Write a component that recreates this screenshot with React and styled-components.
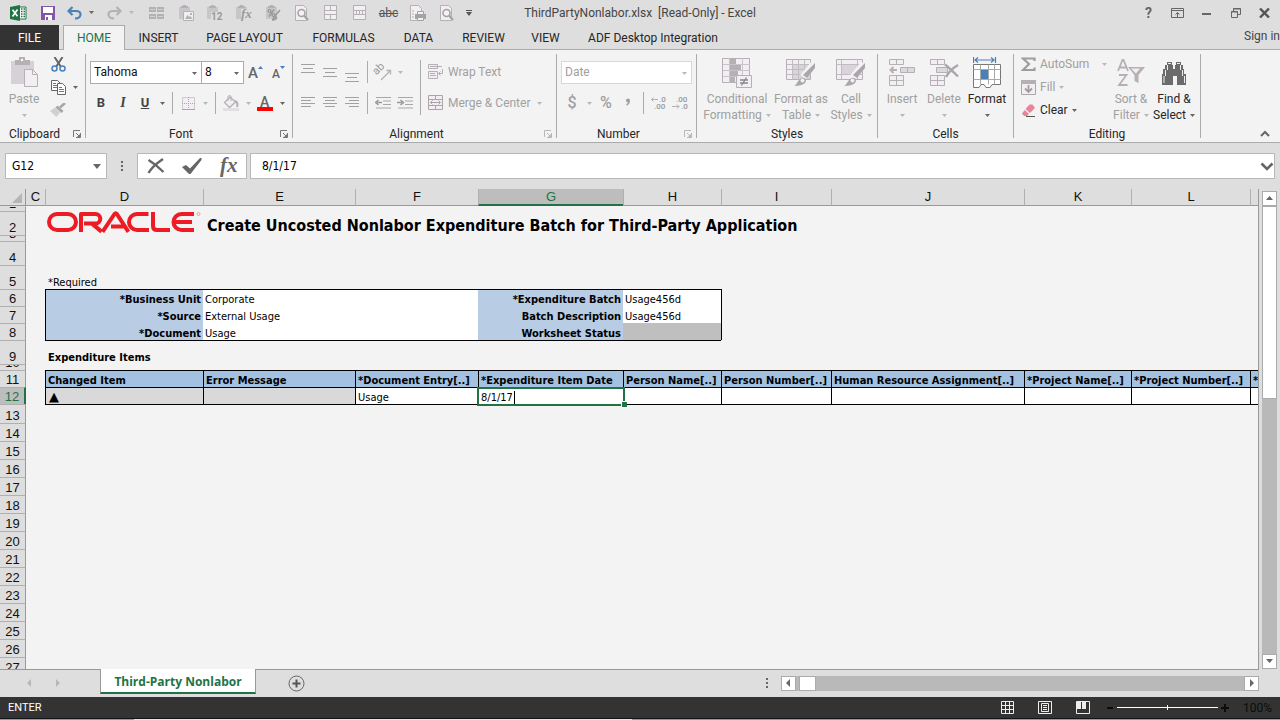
import React from 'react';
import styled, { createGlobalStyle, css } from 'styled-components';

const ui = "Roboto, 'Open Sans', 'Liberation Sans', sans-serif";
const cellFont = "'DejaVu Sans Condensed', 'DejaVu Sans', sans-serif";
const c = {
  chrome: '#dedede',
  face: '#f3f3f3',
  line: '#ababab',
  text: '#262626',
  off: '#a0a0a0',
  offIcon: '#b4b0b4',
  offFill: '#f3eef4',
  icon: '#666666',
  green: '#217346',
  blue: '#4a80b8',
  label: '#b8cce4',
  head: '#a3c1e0',
  dark: '#333333',
};

const Global = createGlobalStyle`
  *, *::before, *::after { box-sizing: border-box; }
  body { margin: 0; background: ${c.chrome}; font: 12px/16px ${ui}; color: ${c.text}; overflow: hidden; }
  button, input, select { font: inherit; color: inherit; margin: 0; padding: 0; border: 0; border-radius: 0; background: none; }
  button { cursor: pointer; white-space: nowrap; }
  input, select { outline: none; }
  svg { display: block; flex: none; }
`;

const Window = styled.div`
  display: flex;
  flex-direction: column;
  height: 100vh;
`;

/* Title bar */
const TitleBar = styled.header`
  display: grid;
  grid-template-columns: 1fr auto 1fr;
  align-items: center;
  height: 25px;
`;
const QuickAccess = styled.div`
  display: flex;
  align-items: center;
  padding-left: 4px;
`;
const QuickButton = styled.button`
  display: flex;
  align-items: center;
  justify-content: center;
  width: ${p => p.$w || 29}px;
  height: 22px;
  font-size: 12px;
  color: #555;
`;
const QuickSpace = styled.span`
  width: 6px;
`;
const Title = styled.div`
  color: #444;
  white-space: pre;
`;
const WindowButtons = styled.div`
  display: flex;
  justify-content: flex-end;
  padding-right: 1px;
`;

/* Tabs */
const TabRow = styled.nav`
  display: flex;
  height: 25px;
  box-shadow: inset 0 -1px 0 ${c.line};
`;
const tabKinds = {
  file: css`background: ${c.dark}; color: #fff; margin-right: 4px;`,
  active: css`
    background: ${c.face};
    color: ${c.green};
    border: 1px solid ${c.line};
    border-bottom: 0;
    margin-right: 2px;
  `,
};
const Tab = styled.button`
  width: ${p => p.$w}px;
  padding: 0;
  ${p => tabKinds[p.$kind]}
`;
const SignIn = styled.button`
  margin-left: auto;
  padding-bottom: 4px;
  align-self: center;
  color: #444;
`;

/* Ribbon */
const Ribbon = styled.section`
  display: flex;
  height: 93px;
  background: ${c.face};
  border-bottom: 1px solid ${c.line};
`;
const Group = styled.section`
  display: flex;
  flex-direction: column;
  flex: 0 0 ${p => p.$w}px;
`;
const GroupBody = styled.div`
  display: flex;
  height: 76px;
  padding-left: ${p => p.$pad || 0}px;
`;
const GroupFoot = styled.footer`
  display: flex;
  align-items: center;
  height: 16px;
  text-align: center;
`;
const GroupName = styled.span`
  flex: 1;
`;
const Launcher = styled.button`
  display: flex;
  justify-content: center;
  width: 16px;
  color: ${p => (p.$off ? '#b8b8b8' : '#777')};
`;
const GroupLine = styled.div`
  flex: none;
  width: 1px;
  margin: 4px 0;
  background: ${c.line};
`;
const BigButton = styled.button`
  display: flex;
  flex-direction: column;
  align-items: center;
  width: ${p => p.$w}px;
  height: 76px;
  padding-top: 6px;
  color: ${p => (p.$off ? c.off : c.text)};
`;
const BigIcon = styled.span`
  display: flex;
  align-items: center;
  height: 33px;
  margin-bottom: 2px;
`;
const BigLine = styled.span`
  display: flex;
  align-items: center;
  gap: 4px;
  height: 16px;
`;
const Stack = styled.div`
  display: flex;
  flex-direction: column;
  gap: 1px;
  padding-top: 3px;
  width: ${p => p.$w}px;
`;
const Rows = styled.div`
  display: flex;
  flex-direction: column;
  gap: 9px;
  padding-top: 11px;
`;
const Row = styled.div`
  display: flex;
  align-items: center;
  height: 22px;
`;
const Tool = styled.button`
  display: flex;
  align-items: center;
  justify-content: center;
  width: 22px;
  height: 22px;
  color: ${p => (p.$off ? c.off : '#444')};
`;
const Bold = styled.b`font-size: 13px;`;
const Italic = styled.i`font: italic bold 14px 'Liberation Serif', serif;`;
const Under = styled.b`font-size: 13px; text-decoration: underline;`;
const Symbol = styled.span`
  font-size: 16px;
  font-weight: 500;
`;
const Drop = styled.button`
  display: flex;
  align-items: center;
  justify-content: center;
  width: 12px;
  height: 22px;
`;
const Line = styled.i`
  align-self: ${p => (p.$tall ? 'flex-start' : 'stretch')};
  width: 1px;
  height: ${p => (p.$tall ? '55px' : 'auto')};
  margin: ${p => (p.$tall ? '10px 4px 0' : '0 4px')};
  background: ${c.line};
`;
const TextTool = styled.button`
  display: flex;
  align-items: center;
  gap: 4px;
  height: 22px;
  padding: 0 3px;
  color: ${p => (p.$off ? c.off : c.text)};
`;
const Fill = styled.span`flex: 1;`;
const Picker = styled.label`
  position: relative;
  display: flex;
  width: ${p => p.$w}px;
  height: 23px;
  margin-left: ${p => (p.$joined ? -1 : 0)}px;
  background: #fff;
  border: 1px solid ${p => (p.$off ? '#d8d8d8' : c.line)};
  color: ${p => (p.$off ? c.off : '#111')};
  select { appearance: none; flex: 1; padding-left: 3px; font-size: 12px; }
  svg { position: absolute; right: 4px; top: 9px; pointer-events: none; }
`;
const Collapse = styled.button`
  align-self: flex-end;
  margin-left: auto;
  padding: 4px 8px;
`;

/* Formula bar */
const FormulaBar = styled.div`
  display: flex;
  align-items: center;
  height: 46px;
  padding: 0 5px;
`;
const BarBox = styled.div`
  display: flex;
  align-items: center;
  min-width: 0;
  height: 26px;
  background: #fff;
  border: 1px solid #b9b9b9;
  font: 12px/16px ${cellFont};
  color: #000;
  flex: ${p => (p.$w ? `0 0 ${p.$w}px` : 1)};
  margin-right: ${p => p.$gap || 0}px;
  padding: 0 ${p => p.$end || 0}px 0 ${p => p.$pad || 0}px;
  justify-content: ${p => (p.$tools ? 'space-around' : 'flex-start')};
  input { flex: 1; min-width: 0; }
`;
const DotsBox = styled.span`
  display: flex;
  justify-content: center;
  width: ${p => p.$w}px;
`;
const BarTool = styled.button`
  display: flex;
  justify-content: center;
  width: 30px;
`;

/* Sheet */
const Body = styled.main`
  display: flex;
  flex: 1;
  min-height: 0;
`;
const Viewport = styled.div`
  flex: 1;
  min-width: 0;
  overflow: hidden;
  background: ${c.face};
  border-right: 1px solid #999;
`;
const Sheet = styled.table`
  width: 100%;
  table-layout: fixed;
  border-collapse: separate;
  border-spacing: 0;
  font: 11px/12px ${cellFont};
  color: #000;
`;
const headLook = css`
  padding: 0;
  font: 13px/14px 'Liberation Sans', sans-serif;
  color: #111;
`;
const ColHead = styled.th`
  ${headLook}
  height: 17px;
  background: ${c.chrome};
  border-left: ${p => (p.$first ? 0 : '1px solid #b0b0b0')};
  border-bottom: 1px solid #999;
  ${p => p.$on && css`background: #bdbdbd; color: ${c.green}; border-bottom: 2px solid ${c.green};`}
`;
const Corner = styled.th`
  height: 17px;
  padding: 0 3px 2px 12px;
  vertical-align: bottom;
  background: ${c.chrome};
  border-right: 1px solid #999;
  border-bottom: 1px solid #999;
`;
const RowHead = styled.th`
  ${headLook}
  background: ${c.chrome};
  border-top: 1px solid ${p => (p.$first ? c.chrome : '#b0b0b0')};
  border-right: 1px solid #999;
  ${p => p.$on && css`background: #bdbdbd; color: ${c.green}; border-right: 2px solid ${c.green};`}
`;
const RowNumber = styled.div`
  display: flex;
  align-items: flex-end;
  justify-content: center;
  height: ${p => p.$h - 1}px;
  overflow: hidden;
`;
const Cell = styled.td`
  padding: 0 2px 0 ${p => (p.$in ? 3 : 2)}px;
  vertical-align: bottom;
  white-space: nowrap;
  overflow: hidden;
  position: relative;
  background: ${p => p.$bg || 'transparent'};
  text-align: ${p => (p.$right ? 'right' : 'left')};
  font-weight: ${p => (p.$bold ? 700 : 400)};
  border-left: ${p => (p.$l ? '1px solid #000' : 0)};
  border-top: ${p => (p.$t ? '1px solid #000' : 0)};
  ${p => p.$open && 'overflow: visible;'}
`;
const SheetTitle = styled.h1`
  margin: 0;
  padding-left: 2px;
  font: bold 16px/18px ${cellFont};
`;
const Triangle = styled.span`
  display: block;
  font: 13px/14px 'DejaVu Sans', sans-serif;
`;
const Editor = styled.span`
  display: flex;
  align-items: center;
  height: 14px;
  input { width: 33px; height: 14px; }
`;
const Caret = styled.i`
  width: 1px;
  height: 13px;
  background: #000;
`;
const Selection = styled.span`
  position: absolute;
  inset: -1px -2px -2px -2px;
  border: 2px solid ${c.green};
  pointer-events: none;
  z-index: 1;
  &::after {
    content: '';
    position: absolute;
    right: -4px;
    bottom: -3px;
    width: 6px;
    height: 6px;
    background: ${c.green};
    border: solid #fff;
    border-width: 1px 0 0 1px;
  }
`;

/* Scroll bars */
const VScroll = styled.div`
  display: flex;
  flex-direction: column;
  width: 21px;
  padding: 2px 3px 0;
`;
const ScrollButton = styled.button`
  display: flex;
  align-items: center;
  justify-content: center;
  flex: none;
  width: 15px;
  height: 15px;
  background: #fff;
  border: 1px solid ${c.line};
`;
const Track = styled.div`
  display: flex;
  flex: 1;
  background: #b9b9b9;
  padding-left: ${p => (p.$h ? 3 : 0)}px;
`;
const Thumb = styled.div`
  background: #fff;
  border: 1px solid ${c.line};
  width: ${p => (p.$h ? '17px' : '15px')};
  height: ${p => (p.$h ? '15px' : '43%')};
`;

/* Sheet tabs and status bar */
const SheetBar = styled.div`
  display: flex;
  align-items: center;
  height: 28px;
  padding-right: 21px;
  background: linear-gradient(#999, #999) 0 0 / calc(100% - 21px) 1px no-repeat ${c.chrome};
`;
const SheetNav = styled.div`
  display: flex;
  justify-content: center;
  width: 100px;
  padding-right: 14px;
`;
const NavButton = styled.button`
  display: flex;
  justify-content: center;
  width: 28px;
`;
const SheetTab = styled.button`
  align-self: flex-start;
  height: 25px;
  width: 156px;
  background: #fff;
  border: 1px solid #999;
  border-width: 0 1px 2px;
  border-bottom-color: ${c.green};
  padding-top: 2px;
  color: ${c.green};
  font: bold 12px/20px 'Open Sans', sans-serif;
`;
const AddSheet = styled.button`
  margin-left: 32px;
`;
const HScroll = styled.div`
  display: flex;
  flex: 0 0 38%;
  min-width: 0;
`;
const StatusBar = styled.footer`
  display: flex;
  align-items: center;
  height: 21px;
  padding: 0 8px;
  background: ${c.dark};
  color: #fff;
  font-size: 11px;
`;
const ViewButtons = styled.div`
  display: flex;
  gap: 24px;
  margin: 0 16px 0 auto;
`;
const Zoom = styled.div`
  display: flex;
  align-items: center;
  gap: 3px;
  margin-right: 14px;
  input {
    appearance: none;
    width: 101px;
    height: 9px;
    background: linear-gradient(#fff, #fff) 0 4px / 100% 1px no-repeat;
  }
  input::-webkit-slider-thumb {
    appearance: none;
    width: 1px;
    height: 5px;
    background: #fff;
  }
`;
const Percent = styled.output`
  color: #0c0c0c;
  font-size: 12px;
`;
const TaskEdge = styled.div`
  height: 2px;
  border-top: 1px solid #10151a;
  background: linear-gradient(90deg, #8b9aa8 0 134px, #e6e6e6 134px 632px, #8b9aa8 632px);
`;

/* Icons */
const Svg = ({ w = 16, h = 16, children, ...rest }) => (
  <svg width={w} height={h} viewBox={`0 0 ${w} ${h}`} fill="none" aria-hidden="true" {...rest}>
    {children}
  </svg>
);
const arrows = { down: 'M0 1h5L2.5 4z', up: 'M0 4h7L3.5 0z', left: 'M4 0v8L0 4z', right: 'M1 0v8L5 4z' };
const Arrow = ({ off, dir = 'down' }) => (
  <Svg w={dir === 'up' ? 7 : 5} h={dir === 'down' || dir === 'up' ? 5 : 8}>
    <path d={arrows[dir]} fill={off ? '#b8b8b8' : '#666'} />
  </Svg>
);
const o = c.offIcon;
const f = c.offFill;

const ExcelIcon = () => (
  <Svg w={18} h={16}>
    <path d="M9 2h7v12H9z" fill="#fff" stroke="#217346" />
    <path d="M11 4h1.500M13.500 4H15M11 6.500h1.500M13.500 6.500H15M11 9h1.500M13.500 9H15M11 11.500h1.500M13.500 11.500H15" stroke="#217346" strokeWidth="1.300" />
    <path d="M0 2l10-2v16L0 14z" fill="#217346" />
    <path d="M2.500 4.800l5 6.400M7.500 4.500l-5 7" stroke="#fff" strokeWidth="1.700" />
  </Svg>
);
const SaveIcon = () => (
  <Svg w={14} h={14}>
    <path d="M0 0h14v14H0z" fill="#8455a8" />
    <path d="M2 1h10v6H2zM4 9h7v5H4z" fill="#fff" />
    <path d="M5 11h2v3H5z" fill="#8455a8" />
  </Svg>
);
const UndoIcon = ({ color, flip }) => (
  <Svg w={15} h={14}>
    <g transform={flip ? 'translate(15 0) scale(-1 1)' : undefined} stroke={color} strokeWidth="2.200">
      <path d="M5.500 1L1.500 5l4 4" />
      <path d="M2 5h7c3.500 0 4.500 1.800 4.500 3.500S12 12.500 8 12.500" />
    </g>
  </Svg>
);
const FreezeIcon = () => (
  <Svg w={15} h={12}>
    <path d="M0 0h7v5H0zM8 0h7v5H8zM0 7h7v5H0zM8 7h7v5H8z" fill={o} />
    <path d="M1 2.500h5M9 2.500h5M1 9.500h5M9 9.500h5" stroke="#d3d1d3" />
  </Svg>
);
const Clip = ({ w = 16, children }) => (
  <Svg w={w}>
    <path d="M1 2h11v12H1z" fill="#c9c6c9" />
    <path d="M3 3V1h2V0h3v1h2v2z" fill={o} />
    {children}
  </Svg>
);
const PasteImage = () => (
  <Clip>
    <path d="M5.500 6.500h10v9h-10z" fill={f} stroke={o} />
    <path d="M7 14l2.500-4 2 2 1-1 2 3z" fill={o} />
    <path d="M12 8h2v2h-2z" fill={o} />
  </Clip>
);
const PasteValues = () => (
  <Clip w={18}>
    <path d="M5 7h11v9H5z" fill={c.chrome} />
    <text x="5" y="15" fontFamily="Roboto" fontSize="10" fontWeight="700" fill="#999">12</text>
  </Clip>
);
const PasteFormula = () => (
  <Clip w={18}>
    <path d="M6 4h10v12H6z" fill={c.chrome} />
    <text x="6" y="13" fontFamily="Liberation Serif" fontSize="13" fontStyle="italic" fontWeight="700" fill="#999">fx</text>
  </Clip>
);
const PasteFormat = () => (
  <Clip>
    <circle cx="4.500" cy="6" r="1.500" stroke="#888" />
    <circle cx="8.500" cy="10" r="1.500" stroke="#888" />
    <path d="M9 4.500l-5 7M15 5l-5 6M7 15c1 0 2-4 4-3s-1 3-4 3z" stroke="#999" strokeWidth="1.500" />
  </Clip>
);
const SearchDoc = () => (
  <Svg w={14} h={16}>
    <path d="M.5.500h8l3 3v12H.5z" fill={f} stroke={o} />
    <circle cx="6.500" cy="8" r="3.500" fill="#f6f2f6" stroke="#a5a2a5" strokeWidth="1.600" />
    <path d="M9 10.500l4 4.500" stroke="#a5a2a5" strokeWidth="2.200" />
  </Svg>
);
const GridRows = ({ mid }) => (
  <Svg w={13} h={15}>
    <path d="M.5.500h12v14H.5zM.5 5.500h12M.5 9.500h12" fill={f} stroke={o} />
    <path d={mid ? 'M3.500 5v5M6.500 5v5M9.500 5v5' : 'M6.500 0v5M6.500 10v5'} stroke={o} />
  </Svg>
);
const PrintDoc = () => (
  <Svg>
    <path d="M.5.500h8l3 3v12H.5z" fill={f} stroke={o} />
    <path d="M5 9h11v5H5z" fill="#a5a2a5" />
    <path d="M7.500 6.500h6v3h-6zM7.500 12.500h6v3h-6z" fill={f} stroke="#a5a2a5" />
    <path d="M2 6h2M2 9h2M2 12h2" stroke={o} />
  </Svg>
);
const MoreIcon = () => (
  <Svg w={6} h={6}><path d="M0 .5h6" stroke="#555" /><path d="M0 2h6L3 6z" fill="#555" /></Svg>
);
const PasteIcon = () => (
  <Svg w={29} h={31}>
    <path d="M1 4h23v23H1z" fill="#d5d1d6" />
    <path d="M5 8V3h4V0h6v3h5v5z" fill={o} />
    <circle cx="12" cy="3" r="1.200" fill="#fff" />
    <path d="M14.500 12.500h8l5 5v12h-13z" fill={f} stroke={o} />
    <path d="M22.500 12.500v5h5" stroke={o} />
  </Svg>
);
const CutIcon = () => (
  <Svg w={15} h={15}>
    <path d="M3.500 0l6.500 10M11.500 0L5 10" stroke="#666" strokeWidth="2" />
    <circle cx="3.500" cy="11.500" r="2.500" stroke={c.blue} strokeWidth="1.500" />
    <circle cx="11.500" cy="11.500" r="2.500" stroke={c.blue} strokeWidth="1.500" />
  </Svg>
);
const CopyIcon = () => (
  <Svg w={15} h={15}>
    <path d="M.5.500h6l3 3v7h-9z" fill="#fff" stroke="#666" />
    <path d="M2 3.500h3M2 5.500h4M2 7.500h4" stroke={c.blue} />
    <path d="M6.500 3.500h5l3 3v8h-8z" fill="#fff" stroke="#666" />
    <path d="M8 7.500h3M8 9.500h5M8 11.500h5" stroke={c.blue} />
  </Svg>
);
const BrushIcon = () => (
  <Svg w={16} h={14}>
    <path d="M15 0l-5 4.500" stroke="#aaa5aa" strokeWidth="2.600" />
    <path d="M6.500 3.500l6 5.500" stroke="#aaa5aa" strokeWidth="3" />
    <path d="M5 4.500L0 8l6.500 6L10.500 9z" fill="#d3ced4" />
  </Svg>
);
const GrowFont = ({ shrink }) => (
  <Svg w={18} h={20}>
    <text x={shrink ? 4 : 2} y="16" fontFamily="Roboto" fontSize={shrink ? 12 : 15} fontWeight="500" fill="#666">A</text>
    <path d={shrink ? 'M12 4h5l-2.500 3z' : 'M12 7h5l-2.500-3z'} fill={c.blue} />
  </Svg>
);
const BorderIcon = () => (
  <Svg w={13} h={13}>
    <path d="M.5.500h12v12H.5zM6.500 0v13M0 6.500h13" fill={f} stroke="#a9a5a9" strokeDasharray="1 1" />
    <path d="M0 12.500h13" stroke="#a9a5a9" />
  </Svg>
);
const FillIcon = () => (
  <Svg w={16} h={16}>
    <path d="M7 2l5.500 5-6 5.500-5-5z" fill={f} stroke={o} strokeWidth="1.300" />
    <path d="M5 6V2c0-2 3-2 3 0v4" stroke={o} />
    <path d="M12 6c2.500 1 3 3 2 6" stroke={o} strokeWidth="2" />
    <path d="M0 13h16v3H0z" fill="#e3dde4" />
  </Svg>
);
const FontColor = () => (
  <Svg w={16} h={20}>
    <text x="3" y="14" fontFamily="Roboto" fontSize="14" fontWeight="500" fill="#666">A</text>
    <path d="M0 14h16v4H0z" fill="#f00" />
  </Svg>
);
const LinesIcon = ({ rows, top }) => (
  <Svg w={14} h={22}>
    <path
      d={rows.map(([x, n], i) => `M${x} ${top + i * (rows.length === 3 ? 4 : 3) + 0.5}h${n}`).join('')}
      stroke="#a3a0a3"
    />
  </Svg>
);
const VAlign = ({ top }) => <LinesIcon top={top} rows={[[0, 14], [2, 10], [0, 14]]} />;
const Orient = () => (
  <Svg w={20} h={20}>
    <text x="3" y="12" fontFamily="Roboto" fontSize="11" fill="#999" transform="rotate(-45 5 12)">ab</text>
    <path d="M8 18l9-9M17.500 12.500v-4h-4" stroke={o} strokeWidth="1.300" />
  </Svg>
);
const Indent = ({ inc }) => (
  <Svg w={16} h={12}>
    <path d="M1 .5h15M8 4h8M8 7.500h8M1 11h15" stroke="#a9a5a9" />
    <path d={inc ? 'M0 5.500h5M3.500 3l3 2.500-3 2.500' : 'M7 5.500H2M3.500 3l-3 2.500 3 2.500'} stroke="#999" strokeWidth="1.500" />
  </Svg>
);
const WrapIcon = () => (
  <Svg w={16} h={16}>
    <path d="M.5.500h9v4h-9zM.5 7.500h9v7h-9z" fill={f} stroke={o} />
    <path d="M2 2.500h12M2 9.500h5M2 11.500h6M11 9.500h3.500V5M12.500 7.500l-2 2 2 2" stroke={o} />
  </Svg>
);
const MergeIcon = () => (
  <Svg w={16} h={16}>
    <path d="M.5.500h14v14H.5zM.5 4.500h14M.5 10.500h14M7.500.500v4M7.500 10.500v4" fill={f} stroke="#a9a5a9" />
    <path d="M2.500 7.500h10M4.500 5.500l-2 2 2 2M10.500 5.500l2 2-2 2" stroke="#a9a5a9" />
  </Svg>
);
const CommaIcon = () => (
  <Svg w={6} h={10}>
    <circle cx="3" cy="2.500" r="2" fill="#a0a0a0" />
    <path d="M4 2.500c.5 2-.5 3.500-2.500 4.500" stroke="#a0a0a0" strokeWidth="1.500" />
  </Svg>
);
const Decimal = ({ inc }) => (
  <Svg w={18} h={16}>
    <g fontFamily="Roboto" fontSize="8" fontWeight="500" fill="#999">
      <text x={inc ? 9 : 4} y="7">{inc ? '.0' : '.00'}</text>
      <text x={inc ? 4 : 9} y="14">{inc ? '.00' : '.0'}</text>
    </g>
    <path d={inc ? 'M8 4.500H1M3.500 2.500l-2 2 2 2' : 'M0 11.500h7M5 9.500l2 2-2 2'} stroke={o} />
  </Svg>
);
const CondIcon = () => (
  <Svg w={30} h={31}>
    <path d="M.5 1.500h27v24H.5z" fill={f} stroke={o} />
    <path d="M8 1h6v6H8zM8 7h11v6H8zM8 13h8v6H8zM8 19h5v6H8z" fill={o} />
    <path d="M1 7.500h27M1 13.500h27M1 19.500h27M7.500 1v25M20.500 1v25" stroke="#c9c4ca" />
    <path d="M14.500 18.500h15v12h-15z" fill={f} stroke={o} />
    <path d="M18 23h8M18 26h8M24.500 20.500l-5 8" stroke="#888" strokeWidth="1.300" />
  </Svg>
);
const BrushBig = () => (
  <>
    <path d="M28 6L17 19" stroke={c.face} strokeWidth="7" />
    <path d="M29 5v5l-8 10-4-3z" fill="#aaa6aa" />
    <path d="M8 28c3-1 4-7 8-8s5 3 3 5-6 3-11 3z" fill="#aaa6aa" />
    <circle cx="16.500" cy="22.500" r="2" fill={f} />
  </>
);
const TableIcon = () => (
  <Svg w={30} h={30}>
    <path d="M.5 1.500h24v20H.5z" fill={f} stroke={o} />
    <path d="M7 7h17v14H7z" fill="#d9d4da" />
    <path d="M.5 6.500h24M.5 11.500h24M.5 16.500h24M6.500 1.500v20M12.500 1.500v20M18.500 1.500v20" stroke="#c1bcc2" />
    <BrushBig />
  </Svg>
);
const StylesIcon = () => (
  <Svg w={30} h={30}>
    <path d="M.5 1.500h26v20H.5z" fill={f} stroke={o} />
    <path d="M6 6h15v11H6z" fill="#d9d4da" />
    <path d="M.5 6.500h26M.5 16.500h26M5.500 1.500v20M21.500 1.500v20" stroke="#c1bcc2" />
    <BrushBig />
  </Svg>
);
const InsertIcon = () => (
  <Svg w={28} h={29}>
    <path d="M1.500 1.500h14v5h-14zM8.500 1.500v5M1.500 17.500h14v10h-14zM8.500 17.500v10M1.500 22.500h14" fill={f} stroke={o} />
    <path d="M12.500 9.500h14v5h-14zM19.500 9.500v5" fill="#ddd8de" stroke={o} />
    <path d="M9 12H3M5.500 9l-3 3 3 3" stroke={o} strokeWidth="2" />
  </Svg>
);
const DeleteIcon = () => (
  <Svg w={29} h={29}>
    <path d="M.5 1.500h14v5H.5zM7.500 1.500v5M.5 17.500h14v10H.5zM7.500 17.500v10M.5 22.500h14" fill={f} stroke={o} />
    <path d="M6.500 9.500h11v5h-11z" fill="#ddd8de" stroke={o} />
    <path d="M15 6.500c4 3 9 8 13 12M28 7c-5 3-10 8-12 12" stroke="#aaa6aa" strokeWidth="2.400" />
  </Svg>
);
const FormatIcon = () => (
  <Svg w={28} h={32}>
    <path d="M.5 0v6M22.500 0v6M2 3h19M5 .5L2 3l3 2.500M18 .5L21 3l-3 2.500" stroke={c.blue} strokeWidth="1.200" />
    <path d="M.5 7.500h27v20H19l-2 3h-4l-2-3H8l-2 3H.5z" fill="#fff" stroke="#777" />
    <path d="M.5 12.500h27M.5 22.500h27M7.500 7.500v20M15.500 7.500v20M21.500 7.500v20" stroke="#a9a9a9" />
    <path d="M8 13h7v9H8z" fill={c.blue} />
  </Svg>
);
const SumIcon = () => (
  <Svg w={15} h={15}>
    <path d="M13.500 4V1.500H2l6 5.500-6 6h11.500V10.500" stroke="#a09ca0" strokeWidth="2.200" />
  </Svg>
);
const FillDown = () => (
  <Svg w={15} h={15}>
    <path d="M.5.500h14v14H.5z" fill={f} stroke="#a9a5a9" />
    <path d="M0 0h15v4H0z" fill={o} />
    <path d="M7.500 5v7M4 8.500L7.500 12 11 8.500" stroke="#a09ca0" strokeWidth="1.800" />
  </Svg>
);
const EraserIcon = () => (
  <Svg w={15} h={15}>
    <path d="M8.500 1.500h3L14 5 9 10 4.500 6z" fill="#e8859b" />
    <path d="M3.800 7L8 11l-2 2H3L1 10.500z" fill="#e8859b" />
    <path d="M5 13.500h9" stroke="#555" />
  </Svg>
);
const SortIcon = () => (
  <Svg w={30} h={30}>
    <path d="M2 13L6.500 2h1L12 13M4 9.500h6" stroke={o} strokeWidth="1.800" />
    <path d="M3 17h7.500L3 27h8.500" stroke={o} strokeWidth="1.800" />
    <path d="M12 9h17l-6.500 8v8l-4-2v-6z" fill={o} />
    <path d="M15 10.500h9l-4 5z" fill={f} />
  </Svg>
);
const FindIcon = () => (
  <Svg w={26} h={24}>
    <path d="M4 4h2V1h5v3h1v4h2V4h1V1h5v3h2v4h1v5h2v11h-9v-9h-4v9H1V13h1V8h2z" fill="#6b6b6b" />
    <path d="M6.500 4v5M4.500 9v6M3 15v7M21.500 9v6M19.500 4v5M23.500 15v7" stroke="#eee" />
    <path d="M7 2.500h3M16 2.500h3" stroke="#eee" />
  </Svg>
);
const LaunchIcon = () => (
  <Svg w={8} h={8}>
    <path d="M.5 7V.5H7M3 3l3 3M7.500 3v4.500H3" stroke="currentColor" />
    <path d="M4 7h3V4z" fill="currentColor" />
  </Svg>
);
const Dots = () => (
  <Svg w={2} h={11}><path d="M0 0h2v2H0zM0 4h2v2H0zM0 8h2v2H0z" fill="#666" /></Svg>
);
const CancelIcon = () => (
  <Svg w={18} h={16}>
    <path d="M1.500 2c5 3 10 7 15 12M16 1C10 5 5 9 1.500 15" stroke="#666" strokeWidth="2.400" />
  </Svg>
);
const CheckIcon = () => (
  <Svg w={20} h={16}>
    <path d="M0 9l4-2 4 3.500L18 0h1.500v2L8.500 16H7z" fill="#666" />
  </Svg>
);
const FxIcon = () => (
  <Svg w={24} h={24}>
    <text x="4" y="18" fontFamily="Liberation Serif" fontSize="21" fontStyle="italic" fontWeight="700" fill="#666">fx</text>
  </Svg>
);
const Chevron = ({ up }) => (
  <Svg w={14} h={9}>
    <path d={up ? 'M3 7l4-4 4 4' : 'M1.500 1.500L7 7l5.500-5.500'} stroke="#666" strokeWidth={up ? 2 : 2.6} />
  </Svg>
);
const HelpGlyph = styled.b`font-size: 14px; color: #666;`;
const RibbonMode = () => (
  <Svg w={13} h={10}>
    <path d="M.5.500h12v9H.5zM.5 2.500h12M6.500 9V4.500M4.500 6.500l2-2 2 2" stroke="#666" />
  </Svg>
);
const MinIcon = () => <Svg w={9} h={10}><path d="M0 6h9" stroke="#666" strokeWidth="2" /></Svg>;
const RestoreIcon = () => (
  <Svg w={10} h={10}>
    <path d="M2.500 3V.5h7v6H7M2 1h8M.5 3.500h6v6h-6zM0 4h7" stroke="#666" />
  </Svg>
);
const CloseIcon = () => <Svg w={11} h={10}><path d="M1 .5l9 9M10 .5l-9 9" stroke="#555" strokeWidth="2.400" /></Svg>;
const PlusCircle = () => (
  <Svg w={17} h={17}>
    <circle cx="8.500" cy="8.500" r="7.500" stroke="#666" />
    <path d="M8.500 4.500v8M4.500 8.500h8" stroke="#555" strokeWidth="2" />
  </Svg>
);
const NormalView = () => (
  <Svg w={13} h={13}><path d="M.5.500h12v12H.5zM4.500 0v13M8.500 0v13M0 4.500h13M0 8.500h13" stroke="#eee" /></Svg>
);
const PageView = () => (
  <Svg w={14} h={13}><path d="M.5.500h13v12H.5zM3.500 2.500h7v8h-7zM5 4.500h4M5 6.500h4M5 8.500h4" stroke="#eee" /></Svg>
);
const BreakView = () => (
  <Svg w={14} h={13}><path d="M.5.500h13v12H.5z" stroke="#eee" /><path d="M1 0h4v8H1zM6 0h4v8H6z" fill="#eee" /></Svg>
);
const Sign = ({ plus }) => (
  <Svg w={8} h={8}><path d={plus ? 'M0 4h8M4 0v8' : 'M1 4h6'} stroke="#0c0c0c" strokeWidth="2" /></Svg>
);
const OracleLogo = () => (
  <Svg w={154} h={24} role="img" aria-hidden={undefined} aria-label="Oracle">
    <g stroke="#ed1c24" strokeWidth="4" strokeLinejoin="round">
      <rect x="2" y="3" width="27" height="16" rx="8" />
      <path d="M34 21V3h14.500a4.800 4.800 0 0 1 0 9.600H37M45 12.600l9.500 8" />
      <path d="M55.500 20.800L67.500 3q1.200-1.500 2.400 0l11.500 17.800M64 15.500h13" />
      <path d="M101.500 3H90a8 8 0 0 0 0 16h12" />
      <path d="M106 1v14q0 4 4 4h13" />
      <path d="M147 3h-12.500a8 8 0 0 0 0 16H147M127.500 11H145" />
    </g>
    <circle cx="151.500" cy="3" r="1.500" stroke="#f08a8e" strokeWidth=".8" />
  </Svg>
);

const tabs = [
  ['FILE', 59, 'file'],
  ['HOME', 62, 'active'],
  ['INSERT', 63],
  ['PAGE LAYOUT', 109],
  ['FORMULAS', 89],
  ['DATA', 61],
  ['REVIEW', 69],
  ['VIEW', 55],
  ['ADF Desktop Integration', 160],
];

const columns = [
  ['C', 19], ['D', 158], ['E', 152], ['F', 123], ['G', 145], ['H', 98],
  ['I', 110], ['J', 193], ['K', 107], ['L', 119], ['', null],
];

const itemHeads = [
  'Changed Item', 'Error Message', '*Document Entry[..]', '*Expenditure Item Date', 'Person Name[..]',
  'Person Number[..]', 'Human Resource Assignment[..]', '*Project Name[..]', '*Project Number[..]', '*',
];

const formRows = [
  [6, '*Business Unit', 'Corporate', '*Expenditure Batch', 'Usage456d'],
  [7, '*Source', 'External Usage', 'Batch Description', 'Usage456d'],
  [8, '*Document', 'Usage', 'Worksheet Status', ''],
];

const plainRows = Array.from({ length: 14 }, (_, i) => 14 + i);

const DropArrow = ({ off, label }) => (
  <Drop aria-label={label}><Arrow off={off} /></Drop>
);

const RibbonGroup = ({ name, w, pad, launch, off, children }) => (
  <>
    <Group $w={w} aria-label={name}>
      <GroupBody $pad={pad}>{children}</GroupBody>
      <GroupFoot>
        <GroupName>{name}</GroupName>
        {launch && <Launcher $off={off} aria-label={`${name} settings`}><LaunchIcon /></Launcher>}
      </GroupFoot>
    </Group>
    <GroupLine />
  </>
);

const Big = ({ w, off, icon, line1, line2 }) => (
  <BigButton $w={w} $off={off}>
    <BigIcon>{icon}</BigIcon>
    <BigLine>{line1}</BigLine>
    <BigLine>{line2}<Arrow off={off} /></BigLine>
  </BigButton>
);

const SheetRow = ({ n, h, on, children }) => (
  <tr>
    <RowHead scope="row" $first={n === 1} $on={on}><RowNumber $h={h}>{n}</RowNumber></RowHead>
    {children}
  </tr>
);

const leftLines = [[0, 14], [0, 10], [0, 14], [0, 10]];
const midLines = [[0, 14], [2, 10], [0, 14], [2, 10]];
const rightLines = [[0, 14], [4, 10], [0, 14], [4, 10]];

function TopBar() {
  const quick = [
    [<ExcelIcon />, 'Excel'], [<SaveIcon />, 'Save'], [<UndoIcon color={c.blue} />, 'Undo', 24],
    [<Arrow />, 'Undo list', 10], null, [<UndoIcon flip color={o} />, 'Redo', 24], [<Arrow off />, 'Redo list', 10],
    null, [<FreezeIcon />, 'Freeze panes'], [<PasteImage />, 'Paste picture'], [<PasteValues />, 'Paste values'],
    [<PasteFormula />, 'Paste formulas'], [<PasteFormat />, 'Paste formatting'], [<SearchDoc />, 'Preview'],
    [<GridRows />, 'Insert rows'], [<GridRows mid />, 'Insert cells'], [<s>abc</s>, 'Strikethrough'],
    [<PrintDoc />, 'Quick print'], [<SearchDoc />, 'Print preview'], [<MoreIcon />, 'Customize', 16],
  ];
  return (
    <TitleBar>
      <QuickAccess>
        {quick.map((q, i) => (q
          ? <QuickButton key={i} aria-label={q[1]} $w={q[2]}>{q[0]}</QuickButton>
          : <QuickSpace key={i} />))}
      </QuickAccess>
      <Title>{'ThirdPartyNonlabor.xlsx  [Read-Only] - Excel'}</Title>
      <WindowButtons>
        <QuickButton aria-label="Help"><HelpGlyph>?</HelpGlyph></QuickButton>
        <QuickButton aria-label="Ribbon display"><RibbonMode /></QuickButton>
        <QuickButton aria-label="Minimize"><MinIcon /></QuickButton>
        <QuickButton aria-label="Restore"><RestoreIcon /></QuickButton>
        <QuickButton aria-label="Close"><CloseIcon /></QuickButton>
      </WindowButtons>
    </TitleBar>
  );
}

function RibbonBar() {
  return (
    <Ribbon>
      <RibbonGroup name="Clipboard" w={85} pad={1} launch>
        <Big w={46} off icon={<PasteIcon />} line1="Paste" />
        <Stack $w={36}>
          <Row><Tool aria-label="Cut"><CutIcon /></Tool></Row>
          <Row><Tool aria-label="Copy"><CopyIcon /></Tool><DropArrow label="Copy options" /></Row>
          <Row><Tool aria-label="Format painter"><BrushIcon /></Tool></Row>
        </Stack>
      </RibbonGroup>
      <RibbonGroup name="Font" w={206} pad={4} launch>
        <Rows>
          <Row>
            <Picker $w={112}>
              <select aria-label="Font name" defaultValue="Tahoma"><option>Tahoma</option></select><Arrow />
            </Picker>
            <Picker $w={43} $joined>
              <select aria-label="Font size" defaultValue="8"><option>8</option></select><Arrow />
            </Picker>
            <Tool aria-label="Increase font size"><GrowFont /></Tool>
            <Tool aria-label="Decrease font size"><GrowFont shrink /></Tool>
          </Row>
          <Row>
            <Tool><Bold>B</Bold></Tool>
            <Tool><Italic>I</Italic></Tool>
            <Tool><Under>U</Under></Tool>
            <DropArrow label="Underline options" />
            <Line />
            <Tool aria-label="Borders"><BorderIcon /></Tool>
            <DropArrow off label="Border options" />
            <Line />
            <Tool aria-label="Fill color"><FillIcon /></Tool>
            <DropArrow off label="Fill options" />
            <Tool aria-label="Font color"><FontColor /></Tool>
            <DropArrow label="Font color options" />
          </Row>
        </Rows>
      </RibbonGroup>
      <RibbonGroup name="Alignment" w={263} pad={4} launch off>
        <Rows>
          <Row>
            <Tool aria-label="Top align"><VAlign top={3} /></Tool>
            <Tool aria-label="Middle align"><VAlign top={7} /></Tool>
            <Tool aria-label="Bottom align"><VAlign top={12} /></Tool>
            <Line />
            <Tool aria-label="Orientation"><Orient /></Tool>
            <DropArrow off label="Orientation options" />
          </Row>
          <Row>
            <Tool aria-label="Align left"><LinesIcon rows={leftLines} top={5} /></Tool>
            <Tool aria-label="Center"><LinesIcon rows={midLines} top={5} /></Tool>
            <Tool aria-label="Align right"><LinesIcon rows={rightLines} top={5} /></Tool>
            <Line />
            <Tool aria-label="Decrease indent"><Indent /></Tool>
            <Tool aria-label="Increase indent"><Indent inc /></Tool>
          </Row>
        </Rows>
        <Line $tall />
        <Rows>
          <Row><TextTool $off><WrapIcon />Wrap Text</TextTool></Row>
          <Row><TextTool $off><MergeIcon />Merge &amp; Center</TextTool><DropArrow off label="Merge options" /></Row>
        </Rows>
      </RibbonGroup>
      <RibbonGroup name="Number" w={139} pad={4} launch off>
        <Rows>
          <Row>
            <Picker $w={131} $off>
              <select aria-label="Number format" defaultValue="Date"><option>Date</option></select><Arrow off />
            </Picker>
          </Row>
          <Row>
            <Tool $off><Symbol>$</Symbol></Tool>
            <DropArrow off label="Accounting options" />
            <Tool $off><Symbol>%</Symbol></Tool>
            <Tool aria-label="Comma style"><CommaIcon /></Tool>
            <Line />
            <Tool aria-label="Increase decimal"><Decimal inc /></Tool>
            <Tool aria-label="Decrease decimal"><Decimal /></Tool>
          </Row>
        </Rows>
      </RibbonGroup>
      <RibbonGroup name="Styles" w={180} pad={6}>
        <Big w={68} off icon={<CondIcon />} line1="Conditional" line2="Formatting" />
        <Big w={60} off icon={<TableIcon />} line1="Format as" line2="Table" />
        <Big w={40} off icon={<StylesIcon />} line1="Cell" line2="Styles" />
      </RibbonGroup>
      <RibbonGroup name="Cells" w={135} pad={3}>
        <Big w={42} off icon={<InsertIcon />} line1="Insert" />
        <Big w={42} off icon={<DeleteIcon />} line1="Delete" />
        <Big w={44} icon={<FormatIcon />} line1="Format" />
      </RibbonGroup>
      <RibbonGroup name="Editing" w={186} pad={4}>
        <Stack $w={92}>
          <Row><TextTool $off><SumIcon />AutoSum</TextTool><Fill /><DropArrow off label="AutoSum options" /></Row>
          <Row><TextTool $off><FillDown />Fill<Arrow off /></TextTool></Row>
          <Row><TextTool><EraserIcon />Clear<Arrow /></TextTool></Row>
        </Stack>
        <Big w={42} off icon={<SortIcon />} line1="Sort &" line2="Filter" />
        <Big w={44} icon={<FindIcon />} line1="Find &" line2="Select" />
      </RibbonGroup>
      <Collapse aria-label="Collapse ribbon"><Chevron up /></Collapse>
    </Ribbon>
  );
}

function Grid() {
  return (
    <Viewport>
      <Sheet>
        <colgroup>
          <col width="26" />
          {columns.map(([n, w], i) => <col key={i} width={w || undefined} />)}
        </colgroup>
        <thead>
          <tr>
            <Corner aria-label="Select all">
              <Svg w={10} h={10}><path d="M10 0v10H0z" fill="#b5b5b5" /></Svg>
            </Corner>
            {columns.map(([n], i) => <ColHead key={i} scope="col" $first={i === 0} $on={n === 'G'}>{n}</ColHead>)}
          </tr>
        </thead>
        <tbody>
          <SheetRow n={1} h={5}><Cell colSpan={11} /></SheetRow>
          <SheetRow n={2} h={24}>
            <Cell />
            <Cell><OracleLogo /></Cell>
            <Cell colSpan={9}><SheetTitle>Create Uncosted Nonlabor Expenditure Batch for Third-Party Application</SheetTitle></Cell>
          </SheetRow>
          <SheetRow n={3} h={6}><Cell colSpan={11} /></SheetRow>
          <SheetRow n={4} h={24}><Cell colSpan={11} /></SheetRow>
          <SheetRow n={5} h={24}><Cell /><Cell $in>*Required</Cell><Cell colSpan={9} /></SheetRow>
          {formRows.map(([n, a, b, d, e]) => (
            <SheetRow key={n} n={n} h={17}>
              <Cell />
              <Cell $l $t={n === 6} $bg={c.label} $bold $right>{a}</Cell>
              <Cell $t={n === 6} $bg="#fff" colSpan={2}>{b}</Cell>
              <Cell $t={n === 6} $bg={c.label} $bold $right>{d}</Cell>
              <Cell $t={n === 6} $bg={e ? '#fff' : '#bfbfbf'}>{e}</Cell>
              <Cell $l colSpan={5} />
            </SheetRow>
          ))}
          <SheetRow n={9} h={24}>
            <Cell /><Cell $t $in $bold>Expenditure Items</Cell><Cell $t colSpan={4} /><Cell colSpan={5} />
          </SheetRow>
          <SheetRow n={10} h={6}><Cell colSpan={11} /></SheetRow>
          <SheetRow n={11} h={17}>
            <Cell />
            {itemHeads.map(t => <Cell key={t} $l $t $bold $bg={c.head}>{t}</Cell>)}
          </SheetRow>
          <SheetRow n={12} h={17} on>
            <Cell />
            <Cell $l $t $in $bg="#d9d9d9"><Triangle>▲</Triangle></Cell>
            <Cell $l $t $bg="#d9d9d9" />
            <Cell $l $t $bg="#fff">Usage</Cell>
            <Cell $l $t $bg="#fff" $open>
              <Editor><input aria-label="G12" defaultValue="8/1/17" /><Caret /></Editor>
              <Selection />
            </Cell>
            {[0, 1, 2, 3, 4, 5].map(i => <Cell key={i} $l $t $bg="#fff" />)}
          </SheetRow>
          <SheetRow n={13} h={19}><Cell /><Cell $t colSpan={10} /></SheetRow>
          {plainRows.map(n => <SheetRow key={n} n={n} h={18}><Cell colSpan={11} /></SheetRow>)}
        </tbody>
      </Sheet>
    </Viewport>
  );
}

export default function App() {
  return (
    <Window>
      <Global />
      <TopBar />
      <TabRow>
        {tabs.map(([t, w, kind]) => <Tab key={t} $w={w} $kind={kind}>{t}</Tab>)}
        <SignIn>Sign in</SignIn>
      </TabRow>
      <RibbonBar />
      <FormulaBar>
        <BarBox $w={102} $pad={6} $end={3}>
          <input aria-label="Name box" defaultValue="G12" />
          <Drop aria-label="Names"><Svg w={8} h={5}><path d="M0 0h8L4 5z" fill="#666" /></Svg></Drop>
        </BarBox>
        <DotsBox $w={30}><Dots /></DotsBox>
        <BarBox $w={110} $gap={3} $tools>
          <BarTool aria-label="Cancel"><CancelIcon /></BarTool>
          <BarTool aria-label="Enter"><CheckIcon /></BarTool>
          <BarTool aria-label="Insert function"><FxIcon /></BarTool>
        </BarBox>
        <BarBox $pad={11}>
          <input aria-label="Formula" defaultValue="8/1/17" />
          <button aria-label="Expand formula bar"><Chevron /></button>
        </BarBox>
      </FormulaBar>
      <Body>
        <Grid />
        <VScroll>
          <ScrollButton aria-label="Scroll up"><Arrow dir="up" /></ScrollButton>
          <Track><Thumb /></Track>
          <ScrollButton aria-label="Scroll down"><Svg w={7} h={5}><path d="M0 0h7L3.500 4z" fill="#666" /></Svg></ScrollButton>
        </VScroll>
      </Body>
      <SheetBar>
        <SheetNav>
          <NavButton aria-label="Previous sheet"><Arrow dir="left" off /></NavButton>
          <NavButton aria-label="Next sheet"><Arrow dir="right" off /></NavButton>
        </SheetNav>
        <SheetTab>Third-Party Nonlabor</SheetTab>
        <AddSheet aria-label="New sheet"><PlusCircle /></AddSheet>
        <Fill />
        <DotsBox $w={28}><Dots /></DotsBox>
        <HScroll>
          <ScrollButton aria-label="Scroll left"><Arrow dir="left" /></ScrollButton>
          <Track $h><Thumb $h /></Track>
          <ScrollButton aria-label="Scroll right"><Arrow dir="right" /></ScrollButton>
        </HScroll>
      </SheetBar>
      <StatusBar>
        ENTER
        <ViewButtons>
          <button aria-label="Normal view"><NormalView /></button>
          <button aria-label="Page layout view"><PageView /></button>
          <button aria-label="Page break view"><BreakView /></button>
        </ViewButtons>
        <Zoom>
          <button aria-label="Zoom out"><Sign /></button>
          <input type="range" aria-label="Zoom" min="0" max="200" defaultValue="100" />
          <button aria-label="Zoom in"><Sign plus /></button>
        </Zoom>
        <Percent>100%</Percent>
      </StatusBar>
      <TaskEdge />
    </Window>
  );
}
